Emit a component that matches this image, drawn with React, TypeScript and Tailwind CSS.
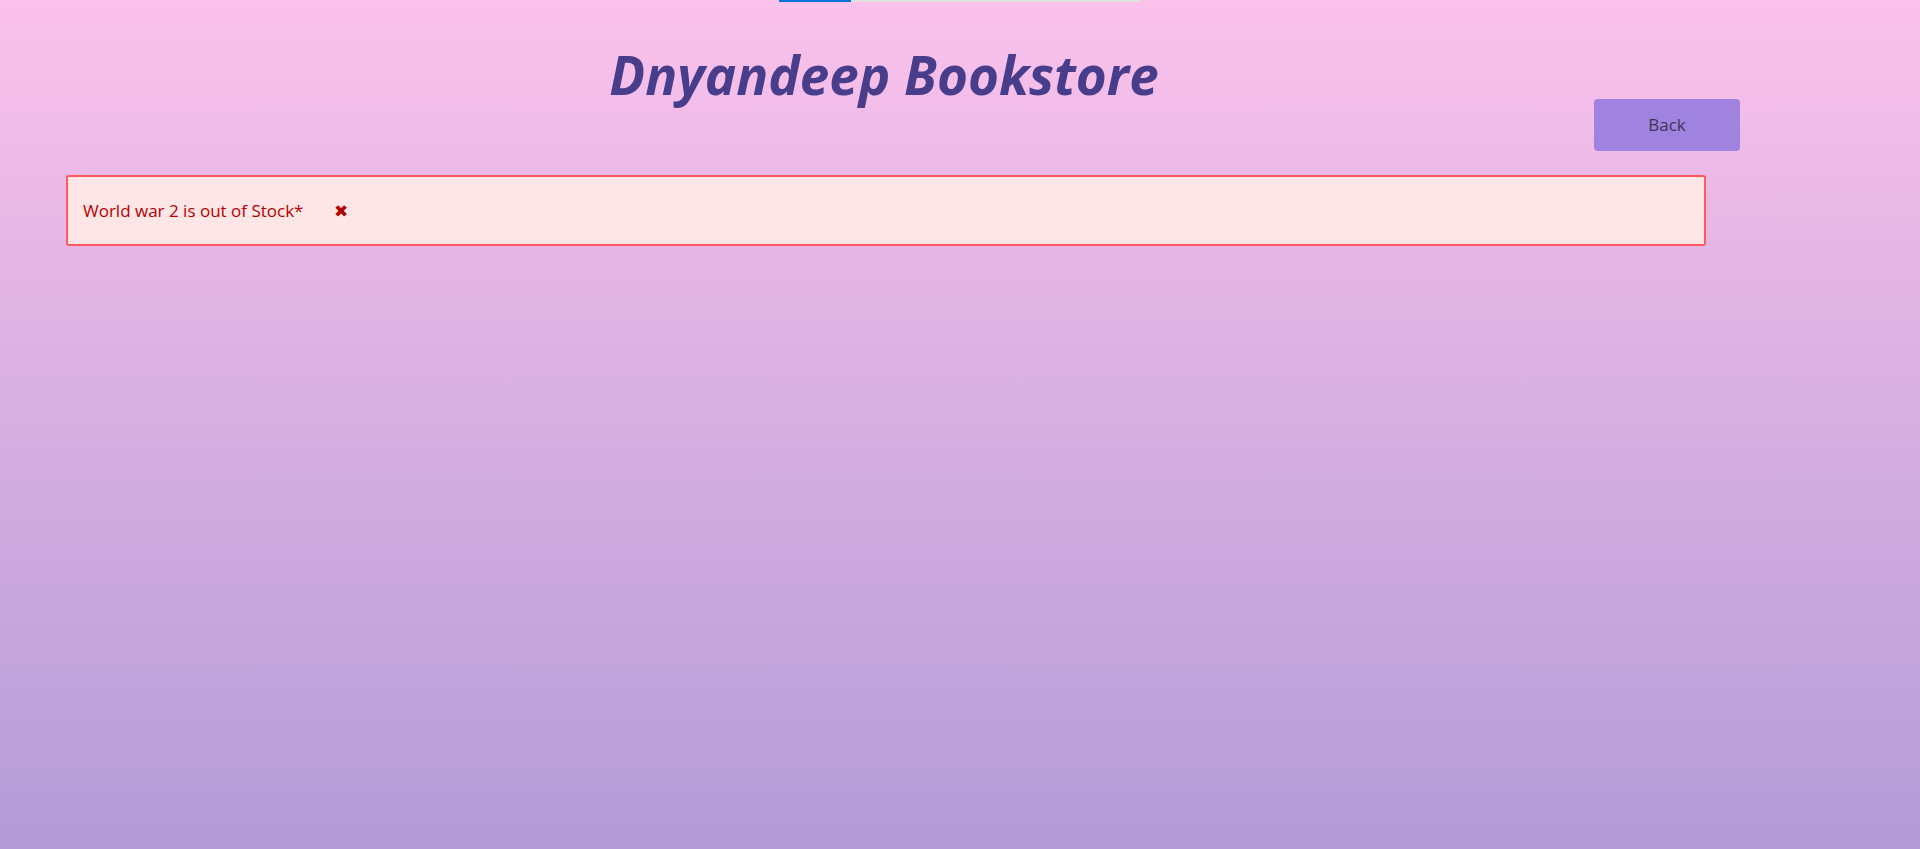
export default function App() {
  return (
    <div className="min-h-screen bg-gradient-to-b from-[#fbc2eb] to-[#b39bd7] font-['Open_Sans',sans-serif]">
      {/* Loading bar */}
      <div className="mx-auto flex h-[2px] w-[362px] bg-[#e0e0e0]">
        <div className="h-full w-[72px] bg-[#0b72d9]" />
      </div>

      <header className="flex flex-col">
        <h1 className="pr-[152px] pt-[41px] text-center text-[53px] font-bold italic leading-[64px] text-[#483d8b]">
          Dnyandeep Bookstore
        </h1>
        <div className="-mt-[8px] flex justify-end pr-[180px]">
          <button className="h-[52px] w-[146px] rounded-[4px] bg-[#a083e0] text-[17px] text-[#3f3452]">
            Back
          </button>
        </div>
      </header>

      <div className="ml-[66px] mt-[24px] flex h-[71px] w-[1640px] items-center gap-[31px] rounded-[3px] border-2 border-[#ff5a5f] bg-[#ffe6e6] px-[15px] text-[17px] text-[#b30000]">
        <span>World war 2 is out of Stock*</span>
        <span className="text-[17px] leading-none">✖</span>
      </div>
    </div>
  );
}
